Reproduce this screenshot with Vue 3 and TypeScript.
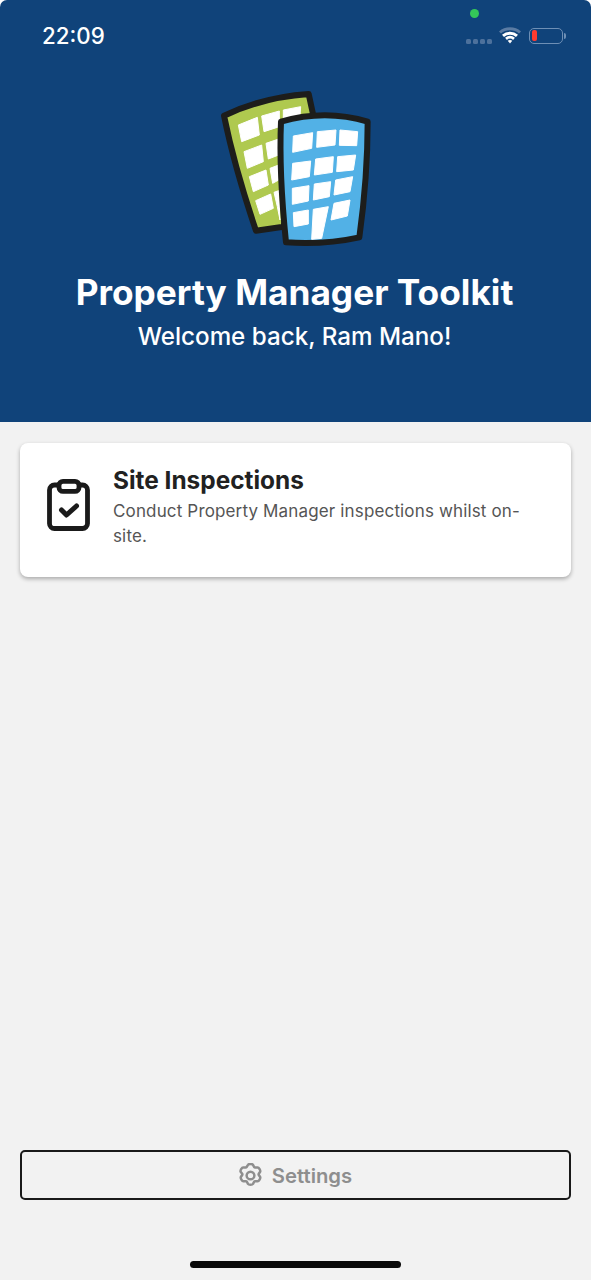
<template>
  <div class="screen">
    <!-- 顶部 -->
    <header class="hero">
      <div class="status-bar">
        <span class="clock">22:09</span>
        <span class="camera-dot"></span>
        <div class="status-icons">
          <div class="signal">
            <i v-for="n in 4" :key="n"></i>
          </div>
          <svg class="wifi" width="22" height="17" viewBox="0 0 22 17">
            <path d="M1 5.500C6.500 .6 15.500 .6 21 5.500" fill="none" stroke="#5a7ba3" stroke-width="3" />
            <path d="M4 8.800C8 5.300 14 5.300 18 8.800" fill="none" stroke="#fff" stroke-width="3" />
            <path d="M7 11.800C9.400 9.800 12.600 9.800 15 11.800" fill="none" stroke="#fff" stroke-width="2.800" />
            <path d="M8.700 13.700C10 12.700 12 12.700 13.300 13.700L11 16.500Z" fill="#fff" />
          </svg>
          <div class="battery">
            <span class="battery-level"></span>
          </div>
          <span class="battery-cap"></span>
        </div>
      </div>

      <svg class="logo" width="190" height="175" viewBox="0 0 570 525">
        <path d="M72 107C150 70 240 48 326 42L345 130L250 440L168 452C130 340 95 220 72 107Z" fill="#afc94f" stroke="#1d1d1b" stroke-width="18" stroke-linejoin="round" />
        <polygon v-for="(w, i) in greenWindows" :key="'g' + i" class="window" :points="w" />
        <path d="M243 125C330 100 420 100 503 125C503 250 492 370 478 472C405 488 330 492 258 487C245 360 238 240 243 125Z" fill="#52b1e6" stroke="#1d1d1b" stroke-width="18" stroke-linejoin="round" />
        <polygon v-for="(w, i) in blueWindows" :key="'b' + i" class="window" :points="w" />
      </svg>

      <h1 class="title">Property Manager Toolkit</h1>
      <p class="welcome">Welcome back, Ram Mano!</p>
    </header>

    <main class="content">
      <div class="card">
        <svg class="card-icon" width="44" height="52" viewBox="0 0 44 52" fill="none" stroke="#1a1a1a" stroke-width="4.800" stroke-linejoin="round" stroke-linecap="round">
          <path d="M11 6H7.500a5 5 0 0 0-5 5v33.500a5 5 0 0 0 5 5h28a5 5 0 0 0 5-5V11a5 5 0 0 0-5-5H33" />
          <rect x="12" y="2.400" width="20" height="10" rx="4" />
          <path d="M14.500 31l5 5 10-9" stroke-width="5" />
        </svg>
        <div class="card-body">
          <div class="card-title">Site Inspections</div>
          <div class="card-desc">Conduct Property Manager inspections whilst on-site.</div>
        </div>
      </div>

      <button class="settings-btn">
        <svg width="23" height="25" viewBox="2 1 20 22" fill="none" stroke="#8e8e8e" stroke-width="2.200" stroke-linejoin="round">
          <path d="M9.800 2.600c.6-1 3.800-1 4.400 0l1 1.900c.2.300.5.500.9.500l2.200-.1c1.100 0 2.700 2.800 2.200 3.800l-1.200 1.800c-.2.300-.2.700 0 1l1.200 1.800c.5 1-1.100 3.800-2.200 3.800l-2.200-.1c-.4 0-.7.200-.9.500l-1 1.900c-.6 1-3.800 1-4.400 0l-1-1.900c-.2-.3-.5-.5-.9-.5l-2.200.1c-1.100 0-2.700-2.800-2.200-3.800l1.200-1.800c.2-.3.2-.7 0-1L3.300 8.700c-.5-1 1.100-3.800 2.200-3.800l2.200.1c.4 0 .7-.2.9-.5z" />
          <circle cx="12" cy="12" r="3.400" />
        </svg>
        <span>Settings</span>
      </button>

      <div class="home-indicator"></div>
    </main>
  </div>
</template>

<script setup lang="ts">
const greenWindows: string[] = [
  '115,135 172,112 178,165 125,185',
  '185,108 238,93 238,140 192,155',
  '250,90 302,80 300,110 250,120',
  '132,215 185,195 190,245 142,265',
  '198,190 236,177 236,225 205,237',
  '148,290 198,270 205,315 160,335',
  '210,265 236,255 236,300 218,310',
  '167,362 212,342 220,385 180,403',
  '222,337 236,332 240,420 232,380',
]

const blueWindows: string[] = [
  '280,168 338,158 335,205 278,217',
  '352,155 408,150 405,195 350,202',
  '420,150 473,155 470,197 418,196',
  '278,250 332,243 328,290 275,300',
  '347,237 400,230 397,277 343,285',
  '413,230 467,225 460,270 410,275',
  '277,325 327,317 325,363 277,373',
  '343,312 392,305 388,350 340,360',
  '407,300 458,290 450,335 402,345',
  '280,398 325,390 325,432 282,440',
  '340,388 385,380 365,475 335,478',
  '402,370 450,360 442,408 393,420',
]
</script>

<style>
html,
body {
  margin: 0;
  background: #fff;
}
</style>

<style scoped>
.screen {
  height: 1280px;
  display: flex;
  flex-direction: column;
  font-family: Inter, "Liberation Sans", sans-serif;
  overflow: hidden;
}

/* 顶部 */
.hero {
  height: 422px;
  flex-shrink: 0;
  background: #10437a;
  border-radius: 7px 7px 0 0;
  color: #fff;
  display: flex;
  flex-direction: column;
  align-items: center;
  position: relative;
}

.status-bar {
  align-self: stretch;
  height: 70px;
  display: flex;
  justify-content: space-between;
  align-items: flex-start;
  padding: 22px 25px 0 42px;
  box-sizing: border-box;
}

.clock {
  font-size: 22.300px;
  line-height: 27px;
  font-weight: 500;
}

.camera-dot {
  position: absolute;
  left: 470px;
  top: 9px;
  width: 9px;
  height: 9px;
  border-radius: 50%;
  background: #34c759;
}

.status-icons {
  display: flex;
  align-items: center;
  margin-top: 5px;
}

.signal {
  display: flex;
  gap: 2px;
  margin: 11px 7px 0 0;
}

.signal i {
  width: 5px;
  height: 5px;
  border-radius: 1.500px;
  background: #4d719c;
}

.wifi {
  margin-right: 8px;
}

.battery {
  width: 34px;
  height: 16px;
  box-sizing: border-box;
  border: 1.500px solid #6e8fb5;
  border-radius: 5px;
  padding: 1.500px 2px;
}

.battery-level {
  display: block;
  width: 5px;
  height: 100%;
  border-radius: 2px;
  background: #ff3b30;
}

.battery-cap {
  width: 2px;
  height: 6px;
  margin-left: 1px;
  border-radius: 0 2px 2px 0;
  background: #6e8fb5;
}

.logo {
  margin-top: 10px;
  margin-right: 2px;
  display: block;
}

.window {
  fill: #fff;
  stroke: #fff;
  stroke-width: 3;
  stroke-linejoin: round;
}

.title {
  margin: 16px 2px 0 0;
  font-size: 35.250px;
  line-height: 44px;
  font-weight: 700;
}

.welcome {
  margin: 7px 2px 0 0;
  font-size: 24.200px;
  line-height: 30px;
  font-weight: 500;
}

/* 内容 */
.content {
  flex: 1;
  background: #f2f2f2;
  display: flex;
  flex-direction: column;
  padding: 21px 20px 0;
}

.card {
  height: 134px;
  box-sizing: border-box;
  background: #fff;
  border-radius: 8px;
  box-shadow: 0 2px 4px rgba(0, 0, 0, 0.3);
  display: flex;
  padding: 23px 20px 0 27px;
}

.card-icon {
  flex-shrink: 0;
  margin-top: 13px;
  margin-right: 22px;
}

.card-title {
  font-size: 24.400px;
  line-height: 28px;
  font-weight: 700;
  color: #212121;
}

.card-desc {
  margin-top: 5px;
  font-size: 17px;
  letter-spacing: 0.15px;
  line-height: 25px;
  color: #555;
}

.settings-btn {
  margin-top: auto;
  height: 50px;
  background: transparent;
  border: 2px solid #1a1a1a;
  border-radius: 5px;
  display: flex;
  align-items: center;
  justify-content: center;
  gap: 10px;
  font-family: inherit;
  font-size: 20.300px;
  font-weight: 600;
  color: #8e8e8e;
}

.home-indicator {
  width: 211px;
  height: 7px;
  border-radius: 4px;
  background: #0a0a0a;
  align-self: center;
  margin: 61px 0 12px;
}
</style>
